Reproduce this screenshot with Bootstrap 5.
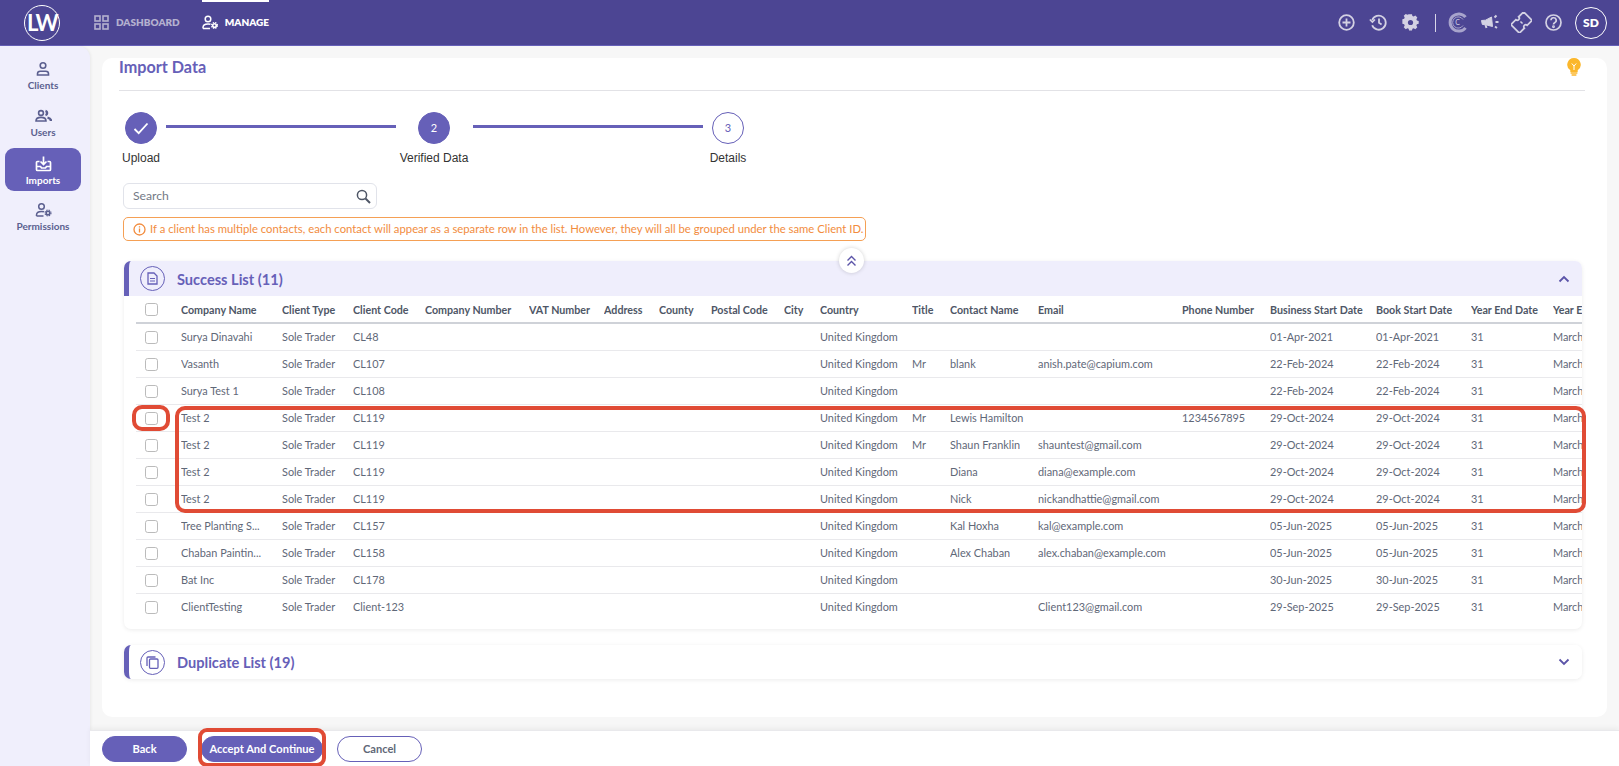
<!DOCTYPE html>
<html lang="en">
<head>
<meta charset="utf-8">
<title>Import Data</title>
<link href="https://cdn.jsdelivr.net/npm/bootstrap@5.3.0/dist/css/bootstrap.min.css" rel="stylesheet">
<style>
html,body{height:100%;overflow:hidden}
body{font-family:"Lato","Noto Sans",sans-serif;background:#f7f7f7;color:#5f6878}
.topbar{height:46px;background:#4c4593;border-bottom:1px solid #6660b8;padding-left:24px;padding-right:12px}
.logo-ring{width:36px;height:36px;border:1.5px solid #fff;border-radius:50%;color:#fff;font-size:22px;font-weight:700;letter-spacing:-1.5px}
.topnav{margin-left:34px;gap:22px}
.topnav-link{font-size:10px;font-weight:800;color:#b4b1cf;gap:7px;height:45px;position:relative}
.topnav-link.is-on{color:#fff}
.topnav-link.is-on::before{content:"";position:absolute;left:0;right:0;top:0;height:2px;background:#fff}
.tool-icons{gap:11px}
.tool-icons svg{display:block}
.tool-sep{width:1px;height:18px;background:#d8d6e8;margin:0 0 0 3px}
.avatar-ring{width:32px;height:32px;border:1px solid #fff;border-radius:50%;color:#fff;font-size:12px;font-weight:800}
.ring-letter{font-size:7px;fill:#d3d1e3}
.shell{height:720px}
.sidenav{width:90px;background:#f0effc;border-top-right-radius:12px;box-shadow:1px 0 3px rgba(0,0,0,.06);padding:5px 9px 0 5px}
.sidenav-item{height:47px;color:#5b5f8f;font-size:10px;font-weight:700;border-radius:9px;gap:1px;padding-top:4px}
.sidenav-item.is-on{background:#6660b8;color:#fff;height:43px;margin:3px 0 1px}
.workarea{min-width:0}
.sheet{height:659px;margin:12px 12px 13px 12px;background:#fff;border-radius:10px;padding:0 22px 0 17px}
.sheet-head{height:33px;border-bottom:1px solid #e2e2e6;padding-top:0}
.sheet-title{font-size:16.2px;font-weight:700;color:#6660b8;margin:0;line-height:18px}
.stepper{margin-top:21px;height:58px}
.step-a{width:44px}.step-b{width:76px}.step-c{width:50px}
.step-dot{width:32px;height:32px;border-radius:50%;background:#6660b8;color:#fff;font-size:11px;border:1px solid #6660b8}
.step-dot.is-next{background:#fff;color:#6660b8}
.step-label{font-family:"Liberation Sans",sans-serif;font-size:12px;color:#333;margin-top:5px;white-space:nowrap}
.step-line{height:3px;background:#6660b8;margin:13px 0 0 3px;width:230px}
.step-line-next{margin-left:1px}
.findbox{width:254px;height:26px;margin:13px 0 0 4px;border:1px solid #e1e3ea;border-radius:6px;padding:0 5px 0 9px;font-size:12.2px;color:#747a86}
.notice-line{width:743px;height:24px;margin:8px 0 0 4px;border:1px solid #f5a055;border-radius:5px;color:#f28c3e;font-size:11.3px;padding-left:9px;gap:4px;white-space:nowrap}
.stack{margin:20px 3px 0 5px;position:relative}
.fold-btn{position:absolute;right:718px;top:-13px;width:25px;height:25px;border-radius:50%;background:#fff;box-shadow:0 0 4px rgba(0,0,0,.18);z-index:2}
.fold{border-radius:7px;box-shadow:0 1px 4px rgba(0,0,0,.08);background:#fff}
.fold-head{height:35px;border-left:5px solid #6660b8;border-radius:7px 7px 0 0;padding:0 12px 0 11px;background:#efeefc}
.fold-closed{margin-top:16px}
.fold-closed .fold-head{height:34px;background:#fff;border-radius:7px}
.fold-badge{width:25px;height:25px;border:1px solid #6660b8;border-radius:50%;margin-right:12px}
.fold-name{font-size:14.6px;font-weight:700;color:#6660b8;margin-top:2px}
.grid-clip{overflow:hidden;padding-left:12px;height:333px}
.data-grid{table-layout:fixed;width:1517px;margin:0;font-size:10.9px;color:#5f6878;--bs-table-color:#5f6878}
.data-grid th,.data-grid td{padding:0;height:27px;line-height:26px;vertical-align:middle;white-space:nowrap;overflow:hidden;border-bottom:1px solid #e9e9ec;font-weight:400;background:transparent}
.data-grid th{font-weight:700;color:#4e5666;border-bottom:2px solid #cfd2d8;font-size:10.7px;height:27px;line-height:24px;padding-top:1px}
.data-grid tbody tr:last-child td{border-bottom:0}
.c0{width:45px}.c1{width:101px}.c2{width:71px}.c3{width:72px}.c4{width:104px}.c5{width:75px}.c6{width:55px}.c7{width:52px}.c8{width:73px}.c9{width:36px}.c10{width:92px}.c11{width:38px}.c12{width:88px}.c13{width:144px}.c14{width:88px}.c15{width:106px}.c16{width:95px}.c17{width:82px}.c18{width:100px}
.tick-box{width:13px;height:13px;border:1.5px solid #bbb;border-radius:4px;margin:0 0 0 9px;display:block;box-shadow:none;float:none}
.mark-ring{position:absolute;border:4px solid #e04b35;border-radius:10px;pointer-events:none;z-index:3}
.mark-check{left:8px;top:144px;width:38px;height:26px}
.mark-rows{left:51px;top:145px;width:1411px;height:107px}
.bottombar{height:36px;background:#fff;border-top:1px solid #e9e9ec;box-shadow:0 -2px 5px rgba(0,0,0,.05);padding:5px 0 0 12px;gap:14px}
.pill{height:26px;border-radius:13px;font-size:11.1px;font-weight:700;padding:0;line-height:24px;border:1px solid #6660b8}
.pill-fill{background:#6660b8;color:#fff}
.pill-line{background:#fff;color:#5f6878}
.pill-back,.pill-cancel{width:85px}
.pill-go{width:122px;position:relative}
.mark-btn{left:-4px;right:-4px;top:-9px;bottom:-6px;border-radius:9px}
</style>
</head>
<body>
<header class="topbar d-flex align-items-center">
  <div class="logo-ring d-flex align-items-center justify-content-center">LW</div>
  <nav class="topnav d-flex align-items-center">
    <a class="topnav-link d-flex align-items-center text-decoration-none" href="#">
      <svg width="15" height="15" viewBox="0 0 15 15" fill="none" stroke="#b4b1cf" stroke-width="1.6"><rect x="1" y="1" width="5" height="5"/><rect x="9" y="1" width="5" height="5"/><rect x="1" y="9" width="5" height="5"/><rect x="9" y="9" width="5" height="5"/></svg>
      DASHBOARD</a>
    <a class="topnav-link is-on d-flex align-items-center text-decoration-none" href="#">
      <svg width="16" height="15" viewBox="0 0 16 15" fill="none" stroke="#fff" stroke-width="1.5"><circle cx="6" cy="4" r="2.8"/><path d="M1 13.5v-1c0-2.2 2-3.6 5-3.6 1 0 1.8.1 2.5.4M1 13.5h7"/><circle cx="12.5" cy="10.5" r="1.8" stroke-width="1.6"/><circle cx="12.5" cy="10.5" r="3" stroke-width="1.1" stroke-dasharray="1.4 1"/></svg>
      MANAGE</a>
  </nav>
  <div class="tool-icons d-flex align-items-center ms-auto">
    <svg width="21" height="21" viewBox="0 0 21 21" fill="none" stroke="#d3d1e3" stroke-width="1.8"><circle cx="10.5" cy="10.5" r="7.3"/><path d="M10.5 6.5v8M6.5 10.5h8"/></svg>
    <svg width="21" height="21" viewBox="0 0 21 21" fill="none" stroke="#d3d1e3" stroke-width="1.8"><path d="M4.2 8.2a7 7 0 1 1 0 5"/><path d="M1.8 7.5l2.6 2.6 2.6-2.6" stroke-width="1.5"/><path d="M11 6.5v4.3l2.6 1.6"/></svg>
    <svg width="21" height="21" viewBox="0 0 21 21" fill="#d3d1e3"><path d="M8.8 2.5h3.4l.5 2.2 1.4.6 2-1.1 2.3 2.3-1.1 2 .6 1.4 2.1.6v3.3l-2.1.5-.6 1.4 1.1 2-2.3 2.3-2-1.1-1.4.6-.5 2.1H8.8l-.5-2.1-1.4-.6-2 1.1-2.3-2.3 1.1-2-.6-1.4-2.1-.5V8.5l2.1-.6.6-1.4-1.1-2 2.3-2.3 2 1.1 1.4-.6z" transform="translate(1.5 0) scale(.86)"/><circle cx="10.5" cy="10.5" r="2.6" fill="#4c4593"/></svg>
    <div class="tool-sep"></div>
    <svg width="21" height="21" viewBox="0 0 21 21" fill="none" stroke="#a8a4cc"><path d="M18.5 5.2A8.6 8.6 0 1 0 18.5 15.8" stroke-width="3"/><path d="M16 7.5A5.6 5.6 0 1 0 16 13.5" stroke-width="1"/><text class="ring-letter" x="8.2" y="13" stroke="none">C</text></svg>
    <svg width="21" height="21" viewBox="0 0 21 21" fill="#d3d1e3" stroke="#d3d1e3" stroke-width="1"><path d="M2.5 8.5l4-.3 6-3.2 1 9.5-6.2-1.6-4-.5z"/><path d="M6.5 13l1 3" stroke-width="2"/><path d="M15.5 5.5l2-2M16.5 10h3M16 14.5l2 1.5" stroke-width="2"/></svg>
    <svg width="21" height="21" viewBox="0 0 21 21" fill="none" stroke="#d3d1e3" stroke-width="1.8"><g transform="rotate(-45 10.5 10.5)"><path d="M1.5 4.5h7a2 2 0 0 0 4 0h7v12h-7a2 2 0 0 0-4 0h-7z"/><path d="M10.5 9v3" stroke-width="1.5"/></g></svg>
    <svg width="21" height="21" viewBox="0 0 21 21" fill="none" stroke="#d3d1e3" stroke-width="1.7"><circle cx="10.5" cy="10.5" r="7.5"/><path d="M8 8.3a2.6 2.6 0 1 1 3.7 2.4c-.8.4-1.2.9-1.2 1.8"/><circle cx="10.5" cy="14.8" r=".6"/></svg>
    <div class="avatar-ring d-flex align-items-center justify-content-center">SD</div>
  </div>
</header>
<div class="shell d-flex">
  <aside class="sidenav flex-shrink-0">
    <a class="sidenav-item d-flex flex-column align-items-center justify-content-center text-decoration-none" href="#">
      <svg width="16" height="16" viewBox="0 0 16 16" fill="none" stroke="currentColor" stroke-width="1.6"><circle cx="8" cy="4.5" r="2.8"/><path d="M2.5 14v-1.2c0-1.5 1.2-2.6 2.7-2.6h5.6c1.5 0 2.7 1.1 2.7 2.6V14z"/></svg>
      Clients</a>
    <a class="sidenav-item d-flex flex-column align-items-center justify-content-center text-decoration-none" href="#">
      <svg width="17" height="16" viewBox="0 0 17 16" fill="none" stroke="currentColor" stroke-width="1.6"><circle cx="6" cy="5" r="2.4"/><path d="M10.5 2.8a2.3 2.3 0 0 1 0 4.4" stroke-width="2.4"/><path d="M1 13c0-2.3 2-3.6 5-3.6s5 1.3 5 3.6z"/><path d="M12.5 9.6c2 .4 3.5 1.6 3.5 3.4" stroke-width="2.4"/></svg>
      Users</a>
    <a class="sidenav-item is-on d-flex flex-column align-items-center justify-content-center text-decoration-none" href="#">
      <svg width="17" height="16" viewBox="0 0 17 16" fill="none" stroke="currentColor" stroke-width="1.7"><path d="M8.5 .5v8M5.5 5.5l3 3 3-3"/><path d="M4.5 5.5h-2a1 1 0 0 0-1 1v7a1 1 0 0 0 1 1h12a1 1 0 0 0 1-1v-7a1 1 0 0 0-1-1h-2"/><path d="M1.5 10.5h4l1 1.5h4l1-1.5h4"/></svg>
      Imports</a>
    <a class="sidenav-item d-flex flex-column align-items-center justify-content-center text-decoration-none" href="#">
      <svg width="17" height="16" viewBox="0 0 17 16" fill="none" stroke="currentColor" stroke-width="1.5"><circle cx="6.5" cy="4.5" r="2.8"/><path d="M1.5 14v-1c0-2.2 2-3.6 5-3.6 1 0 1.8.1 2.5.4M1.5 14h7"/><circle cx="13" cy="11" r="1.8" stroke-width="1.6"/><circle cx="13" cy="11" r="3" stroke-width="1.1" stroke-dasharray="1.4 1"/></svg>
      Permissions</a>
  </aside>
  <main class="workarea flex-grow-1 d-flex flex-column">
    <section class="sheet">
      <div class="sheet-head d-flex align-items-start justify-content-between">
        <h1 class="sheet-title">Import Data</h1>
        <svg class="me-1" width="14" height="18" viewBox="0 0 14 18"><path d="M7 0a6.7 6.7 0 0 0-3.7 12.3V14h7.4v-1.7A6.7 6.7 0 0 0 7 0z" fill="#fbb72c"/><path d="M4.8 5.5L7 8l2.2-2.5M7 8v4" stroke="#fff" stroke-width="1" fill="none"/><path d="M3.6 15h6.8M4.6 17h4.8" stroke="#fbb72c" stroke-width="1.5"/></svg>
      </div>
      <div class="stepper d-flex align-items-start">
        <div class="step-a d-flex flex-column align-items-center">
          <div class="step-dot d-flex align-items-center justify-content-center"><svg width="16" height="13" viewBox="0 0 16 13" fill="none" stroke="#fff" stroke-width="1.8"><path d="M1.5 7l4.2 4.2L14.5 1.5"/></svg></div>
          <div class="step-label">Upload</div>
        </div>
        <div class="step-line"></div>
        <div class="step-b d-flex flex-column align-items-center">
          <div class="step-dot d-flex align-items-center justify-content-center">2</div>
          <div class="step-label">Verified Data</div>
        </div>
        <div class="step-line step-line-next"></div>
        <div class="step-c d-flex flex-column align-items-center">
          <div class="step-dot is-next d-flex align-items-center justify-content-center">3</div>
          <div class="step-label">Details</div>
        </div>
      </div>
      <div class="findbox d-flex align-items-center justify-content-between">
        <span>Search</span>
        <svg width="15" height="15" viewBox="0 0 15 15" fill="none" stroke="#4e5666" stroke-width="1.5"><circle cx="6" cy="6" r="4.6"/><path d="M9.5 9.5l4.5 4.5" stroke-width="1.9"/></svg>
      </div>
      <div class="notice-line d-flex align-items-center">
        <svg class="flex-shrink-0" width="13" height="13" viewBox="0 0 13 13" fill="none" stroke="#f28c3e" stroke-width="1.3"><circle cx="6.5" cy="6.5" r="5.5"/><path d="M6.5 5.5v4M6.5 3.2v1.2"/></svg>
        <span>If a client has multiple contacts, each contact will appear as a separate row in the list. However, they will all be grouped under the same Client ID.</span>
      </div>
      <div class="stack">
        <div class="fold-btn d-flex align-items-center justify-content-center"><svg width="11" height="12" viewBox="0 0 11 12" fill="none" stroke="#5b54a8" stroke-width="1.4"><path d="M1.5 5.5l4-4 4 4M1.5 10.5l4-4 4 4"/></svg></div>
        <div class="fold">
          <div class="fold-head d-flex align-items-center">
            <span class="fold-badge d-flex align-items-center justify-content-center"><svg width="11" height="13" viewBox="0 0 11 13" fill="none" stroke="#6660b8" stroke-width="1.3"><path d="M1 1h6l3 3v8H1z"/><path d="M3 6.5h5M3 9h5" stroke-width="1.2"/></svg></span>
            <span class="fold-name">Success List (11)</span>
            <svg class="ms-auto" width="12" height="8" viewBox="0 0 12 8" fill="none" stroke="#5b54a8" stroke-width="1.8"><path d="M1.5 6.5L6 2l4.5 4.5"/></svg>
          </div>
          <div class="grid-clip">
            <table class="table data-grid">
              <colgroup><col class="c0"><col class="c1"><col class="c2"><col class="c3"><col class="c4"><col class="c5"><col class="c6"><col class="c7"><col class="c8"><col class="c9"><col class="c10"><col class="c11"><col class="c12"><col class="c13"><col class="c14"><col class="c15"><col class="c16"><col class="c17"><col class="c18"></colgroup>
              <thead><tr><th><input class="tick-box form-check-input" type="checkbox" aria-label="All"></th><th>Company Name</th><th>Client Type</th><th>Client Code</th><th>Company Number</th><th>VAT Number</th><th>Address</th><th>County</th><th>Postal Code</th><th>City</th><th>Country</th><th>Title</th><th>Contact Name</th><th>Email</th><th>Phone Number</th><th>Business Start Date</th><th>Book Start Date</th><th>Year End Date</th><th>Year End Month</th></tr></thead>
              <tbody>
                <tr><td><input class="tick-box form-check-input" type="checkbox" aria-label="Row"></td><td>Surya Dinavahi</td><td>Sole Trader</td><td>CL48</td><td></td><td></td><td></td><td></td><td></td><td></td><td>United Kingdom</td><td></td><td></td><td></td><td></td><td>01-Apr-2021</td><td>01-Apr-2021</td><td>31</td><td>March</td></tr>
                <tr><td><input class="tick-box form-check-input" type="checkbox" aria-label="Row"></td><td>Vasanth</td><td>Sole Trader</td><td>CL107</td><td></td><td></td><td></td><td></td><td></td><td></td><td>United Kingdom</td><td>Mr</td><td>blank</td><td>anish.pate@capium.com</td><td></td><td>22-Feb-2024</td><td>22-Feb-2024</td><td>31</td><td>March</td></tr>
                <tr><td><input class="tick-box form-check-input" type="checkbox" aria-label="Row"></td><td>Surya Test 1</td><td>Sole Trader</td><td>CL108</td><td></td><td></td><td></td><td></td><td></td><td></td><td>United Kingdom</td><td></td><td></td><td></td><td></td><td>22-Feb-2024</td><td>22-Feb-2024</td><td>31</td><td>March</td></tr>
                <tr><td><input class="tick-box form-check-input" type="checkbox" aria-label="Row"></td><td>Test 2</td><td>Sole Trader</td><td>CL119</td><td></td><td></td><td></td><td></td><td></td><td></td><td>United Kingdom</td><td>Mr</td><td>Lewis Hamilton</td><td></td><td>1234567895</td><td>29-Oct-2024</td><td>29-Oct-2024</td><td>31</td><td>March</td></tr>
                <tr><td><input class="tick-box form-check-input" type="checkbox" aria-label="Row"></td><td>Test 2</td><td>Sole Trader</td><td>CL119</td><td></td><td></td><td></td><td></td><td></td><td></td><td>United Kingdom</td><td>Mr</td><td>Shaun Franklin</td><td>shauntest@gmail.com</td><td></td><td>29-Oct-2024</td><td>29-Oct-2024</td><td>31</td><td>March</td></tr>
                <tr><td><input class="tick-box form-check-input" type="checkbox" aria-label="Row"></td><td>Test 2</td><td>Sole Trader</td><td>CL119</td><td></td><td></td><td></td><td></td><td></td><td></td><td>United Kingdom</td><td></td><td>Diana</td><td>diana@example.com</td><td></td><td>29-Oct-2024</td><td>29-Oct-2024</td><td>31</td><td>March</td></tr>
                <tr><td><input class="tick-box form-check-input" type="checkbox" aria-label="Row"></td><td>Test 2</td><td>Sole Trader</td><td>CL119</td><td></td><td></td><td></td><td></td><td></td><td></td><td>United Kingdom</td><td></td><td>Nick</td><td>nickandhattie@gmail.com</td><td></td><td>29-Oct-2024</td><td>29-Oct-2024</td><td>31</td><td>March</td></tr>
                <tr><td><input class="tick-box form-check-input" type="checkbox" aria-label="Row"></td><td>Tree Planting S...</td><td>Sole Trader</td><td>CL157</td><td></td><td></td><td></td><td></td><td></td><td></td><td>United Kingdom</td><td></td><td>Kal Hoxha</td><td>kal@example.com</td><td></td><td>05-Jun-2025</td><td>05-Jun-2025</td><td>31</td><td>March</td></tr>
                <tr><td><input class="tick-box form-check-input" type="checkbox" aria-label="Row"></td><td>Chaban Paintin...</td><td>Sole Trader</td><td>CL158</td><td></td><td></td><td></td><td></td><td></td><td></td><td>United Kingdom</td><td></td><td>Alex Chaban</td><td>alex.chaban@example.com</td><td></td><td>05-Jun-2025</td><td>05-Jun-2025</td><td>31</td><td>March</td></tr>
                <tr><td><input class="tick-box form-check-input" type="checkbox" aria-label="Row"></td><td>Bat Inc</td><td>Sole Trader</td><td>CL178</td><td></td><td></td><td></td><td></td><td></td><td></td><td>United Kingdom</td><td></td><td></td><td></td><td></td><td>30-Jun-2025</td><td>30-Jun-2025</td><td>31</td><td>March</td></tr>
                <tr><td><input class="tick-box form-check-input" type="checkbox" aria-label="Row"></td><td>ClientTesting</td><td>Sole Trader</td><td>Client-123</td><td></td><td></td><td></td><td></td><td></td><td></td><td>United Kingdom</td><td></td><td></td><td>Client123@gmail.com</td><td></td><td>29-Sep-2025</td><td>29-Sep-2025</td><td>31</td><td>March</td></tr>
              </tbody>
            </table>
          </div>
          <div class="mark-ring mark-check"></div>
          <div class="mark-ring mark-rows"></div>
        </div>
        <div class="fold fold-closed">
          <div class="fold-head d-flex align-items-center">
            <span class="fold-badge d-flex align-items-center justify-content-center"><svg width="13" height="13" viewBox="0 0 13 13" fill="none" stroke="#6660b8" stroke-width="1.3"><rect x="3.5" y="3" width="8.5" height="9.3" rx="1"/><path d="M9.5 1H2a1 1 0 0 0-1 1v8"/></svg></span>
            <span class="fold-name">Duplicate List (19)</span>
            <svg class="ms-auto" width="12" height="8" viewBox="0 0 12 8" fill="none" stroke="#5b54a8" stroke-width="1.8"><path d="M1.5 1.5L6 6l4.5-4.5"/></svg>
          </div>
        </div>
      </div>
    </section>
    <footer class="bottombar d-flex">
      <button type="button" class="btn pill pill-fill pill-back">Back</button>
      <button type="button" class="btn pill pill-fill pill-go">Accept And Continue<span class="mark-ring mark-btn"></span></button>
      <button type="button" class="btn pill pill-line pill-cancel">Cancel</button>
    </footer>
  </main>
</div>
<script src="https://cdn.jsdelivr.net/npm/bootstrap@5.3.0/dist/js/bootstrap.bundle.min.js"></script>
</body>
</html>
